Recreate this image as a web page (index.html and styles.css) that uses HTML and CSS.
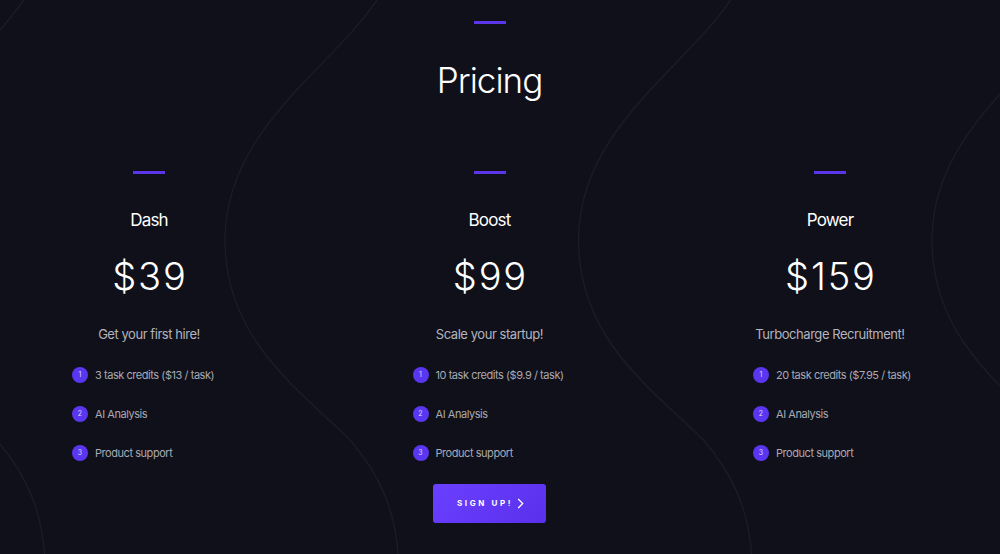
FILE: index.html
```html
<!DOCTYPE html>
<html lang="en">
<head>
<meta charset="utf-8">
<title>Pricing</title>
<link rel="stylesheet" href="styles.css">
</head>
<body>
<div class="page">
  <svg class="waves" width="1000" height="554" viewBox="0 0 1000 554" aria-hidden="true">
    <g fill="none" stroke="#1b1c26" stroke-width="1.4">
      <path id="w" d="M377 0 C330 70 225 130 225 240 C225 340 300 390 350 440 C380 475 395 510 398 554"/>
      <use href="#w" transform="translate(-353.5 0)"/>
      <use href="#w" transform="translate(353.5 0)"/>
      <use href="#w" transform="translate(707 0)"/>
    </g>
  </svg>
  <main class="wrap">
    <div class="bar top-bar"></div>
    <h1 class="title">Pricing</h1>
    <section class="plans">
      <div class="plan">
        <div class="bar"></div>
        <h2 class="plan-name">Dash</h2>
        <div class="price">$39</div>
        <p class="tagline">Get your first hire!</p>
        <ul class="features">
          <li><span class="num">1</span>3 task credits ($13 / task)</li>
          <li><span class="num">2</span>AI Analysis</li>
          <li><span class="num">3</span>Product support</li>
        </ul>
      </div>
      <div class="plan">
        <div class="bar"></div>
        <h2 class="plan-name">Boost</h2>
        <div class="price">$99</div>
        <p class="tagline">Scale your startup!</p>
        <ul class="features">
          <li><span class="num">1</span>10 task credits ($9.9 / task)</li>
          <li><span class="num">2</span>AI Analysis</li>
          <li><span class="num">3</span>Product support</li>
        </ul>
      </div>
      <div class="plan">
        <div class="bar"></div>
        <h2 class="plan-name">Power</h2>
        <div class="price">$159</div>
        <p class="tagline">Turbocharge Recruitment!</p>
        <ul class="features">
          <li><span class="num">1</span>20 task credits ($7.95 / task)</li>
          <li><span class="num">2</span>AI Analysis</li>
          <li><span class="num">3</span>Product support</li>
        </ul>
      </div>
    </section>
    <div class="cta-row">
      <a class="cta" href="#">SIGN UP!
        <svg class="chev" width="7" height="11" viewBox="0 0 7 11"><path d="M1.2 1 L5.7 5.5 L1.2 10" fill="none" stroke="#fff" stroke-width="1.3"/></svg>
      </a>
    </div>
  </main>
</div>
</body>
</html>
```
FILE: styles.css
```css
* { box-sizing: border-box; }
html, body {
  margin: 0;
  padding: 0;
  background: #0f1019;
}
body {
  font-family: Inter, "Noto Sans", sans-serif;
  color: #fff;
}
.page {
  position: relative;
  width: 1000px;
  height: 554px;
  overflow: hidden;
  background: #0f1019;
}
.waves {
  position: absolute;
  left: 0;
  top: 0;
}
.wrap {
  position: relative;
  width: 979px;
  padding-top: 21px;
  display: flex;
  flex-direction: column;
  align-items: center;
}
.bar {
  width: 32px;
  height: 3px;
  background: #5b35ea;
}
.title {
  margin: 35px 0 0;
  font-size: 35px;
  line-height: 42px;
  font-weight: 300;
  letter-spacing: -1px;
}
.plans {
  margin-top: 70px;
  display: grid;
  grid-template-columns: repeat(3, 300px);
  column-gap: 40.5px;
  justify-content: center;
  width: 979px;
}
.plan {
  display: flex;
  flex-direction: column;
  align-items: center;
}
.plan-name {
  margin: 33.5px 0 0;
  font-size: 17px;
  line-height: 24px;
  font-weight: 400;
  letter-spacing: -0.8px;
}
.price {
  margin-top: 21.7px;
  font-size: 38px;
  line-height: 46px;
  font-weight: 300;
  letter-spacing: 1.8px;
  text-indent: 1.8px;
}
.tagline {
  margin: 24.6px 0 0;
  font-size: 13px;
  line-height: 20px;
  color: #b4b4be;
  letter-spacing: -0.45px;
}
.features {
  align-self: stretch;
  list-style: none;
  margin: 11.7px 0 0;
  padding: 0 0 0 73px;
}
.features li {
  display: flex;
  align-items: center;
  height: 39px;
  font-size: 11px;
  color: #a9a9b3;
  letter-spacing: -0.45px;
}
.num {
  width: 16px;
  height: 16px;
  border-radius: 50%;
  background: #5b36f0;
  color: #ddd6ff;
  font-size: 7px;
  letter-spacing: 0;
  display: flex;
  align-items: center;
  justify-content: center;
  margin-right: 7px;
  flex: none;
}
.cta-row {
  margin-top: 11.5px;
  display: flex;
  justify-content: center;
}
.cta {
  width: 113px;
  height: 39px;
  border-radius: 3px;
  background: linear-gradient(135deg, #6a40ff 0%, #5a30ec 100%);
  color: #fff;
  text-decoration: none;
  font-size: 8px;
  font-weight: 700;
  letter-spacing: 2.6px;
  display: flex;
  align-items: center;
  justify-content: center;
  gap: 4px;
  padding-left: 2px;
}
.chev { display: block; }
```
